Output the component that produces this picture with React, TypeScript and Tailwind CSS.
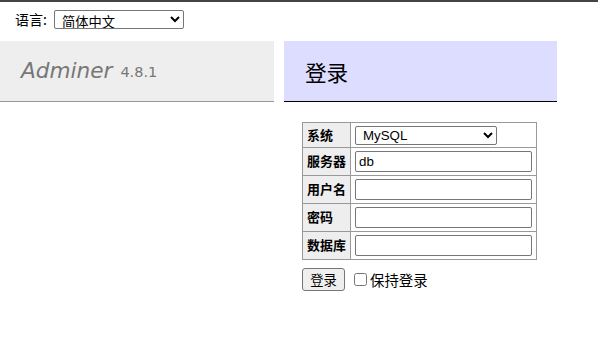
import React from 'react';

// Page de connexion Adminer
const rows = [
  { label: '系统', kind: 'select' },
  { label: '服务器', kind: 'input', value: 'db' },
  { label: '用户名', kind: 'input', value: '' },
  { label: '密码', kind: 'input', value: '' },
  { label: '数据库', kind: 'input', value: '' },
];

const App: React.FC = () => {
  return (
    <div className="min-h-[342px] w-[598px] bg-white border-t-2 border-[#444] text-black text-[14.4px] leading-[1.25] font-['DejaVu_Sans','Noto_Sans_CJK_SC',sans-serif]">
      <div className="h-[39px] pl-[15px] pt-[8px] flex items-start">
        <span className="mt-[1px] text-[14px] font-['Noto_Sans_CJK_SC',sans-serif]">语言:</span>
        <select
          defaultValue="zh"
          className="ml-[7px] w-[130px] h-[19px] border border-[#767676] rounded-[2px] bg-white text-[13.3px] leading-none pl-[3px] font-['Noto_Sans_CJK_SC',sans-serif]"
        >
          <option value="zh">简体中文</option>
          <option value="en">English</option>
        </select>
      </div>

      <div className="flex">
        <div className="w-[274px]">
          <h1 className="h-[61px] bg-[#eee] border-b border-[#999] pl-[21px] flex items-center text-[#777]">
            <span className="italic text-[21.6px]">Adminer</span>
            <span className="ml-[8px] mt-[3px] text-[14.5px]">4.8.1</span>
          </h1>
        </div>

        <div className="ml-[10px] w-[273px]">
          <h2 className="h-[61px] bg-[#ddf] border-b border-black pl-[21px] flex items-center text-[21.6px] font-['Noto_Sans_CJK_SC',sans-serif]">
            登录
          </h2>

          <table className="mt-[20px] ml-[18px] border-collapse text-[12.96px] font-['Noto_Sans_CJK_SC',sans-serif]">
            <tbody>
              {rows.map((r) => (
                <tr key={r.label} className={r.kind === 'select' ? 'h-[25px]' : 'h-[28px]'}>
                  <th className="w-[48px] border border-[#999] bg-[#eee] text-left font-bold px-[4px] py-0">
                    {r.label}
                  </th>
                  <td className="w-[186px] border border-[#999] px-[4px] py-0">
                    {r.kind === 'select' ? (
                      <select
                        defaultValue="server"
                        className="block w-[142px] h-[19px] border border-[#767676] rounded-[2px] bg-white text-[13.3px] leading-none pl-[3px] font-['Liberation_Sans',sans-serif]"
                      >
                        <option value="server">MySQL</option>
                        <option value="sqlite">SQLite 3</option>
                        <option value="pgsql">PostgreSQL</option>
                      </select>
                    ) : (
                      <input
                        defaultValue={r.value}
                        className="block w-[177px] h-[21px] border border-[#767676] rounded-[2px] bg-white text-[13.3px] px-[3px] font-['Liberation_Sans',sans-serif]"
                      />
                    )}
                  </td>
                </tr>
              ))}
            </tbody>
          </table>

          <p className="mt-[8px] ml-[18px] flex items-center font-['Noto_Sans_CJK_SC',sans-serif]">
            <button className="h-[23px] w-[43px] border border-[#767676] rounded-[3px] bg-[#efefef] text-[13.3px] leading-none">
              登录
            </button>
            <label className="ml-[9px] flex items-center text-[14.4px]">
              <input type="checkbox" className="w-[13px] h-[13px] m-0" />
              <span className="ml-[3px]">保持登录</span>
            </label>
          </p>
        </div>
      </div>
    </div>
  );
};

export default App;
